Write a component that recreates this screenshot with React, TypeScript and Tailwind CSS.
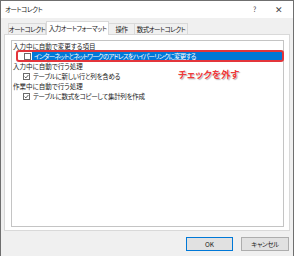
import type { ReactNode } from 'react';

function Box({ checked }: { checked?: boolean }) {
  return (
    <span className="flex h-[7px] w-[7px] shrink-0 items-center justify-center border border-[#6b6b6b] bg-white">
      {checked && (
        <svg viewBox="0 0 5 5" className="h-[5px] w-[5px]">
          <path d="M0.6 2.6 L1.9 3.9 L4.4 1.0" fill="none" stroke="#333" strokeWidth="0.8" />
        </svg>
      )}
    </span>
  );
}

function Group({ children }: { children: ReactNode }) {
  return <div className="flex h-[10px] items-center whitespace-nowrap pl-[1px] leading-none">{children}</div>;
}

function Item({ children }: { children: ReactNode }) {
  return (
    <div className="flex h-[10px] items-center gap-[3px] whitespace-nowrap pl-[11px] leading-none tracking-[-0.3px]">
      <Box checked />
      <span>{children}</span>
    </div>
  );
}

export default function App() {
  return (
    <div className="flex h-[256px] w-[300px] overflow-hidden bg-white font-['Noto_Sans_CJK_JP','Noto_Sans',sans-serif] text-[6.5px] text-[#1a1a1a] [font-feature-settings:'palt']">
      <div className="flex w-[294px] flex-col border-x border-t border-[#6f6f6f] bg-[#f0f0f0]">
        {/* title bar */}
        <div className="flex h-[17px] shrink-0 items-center bg-white pl-[4px] pr-[10px]">
          <span className="flex-1 tracking-[-0.4px]">オートコレクト</span>
          <span className="w-[22px] text-[7px] text-[#444]">?</span>
          <span className="text-[9px] font-light text-[#444]">✕</span>
        </div>

        {/* tabs */}
        <div className="flex h-[16px] shrink-0 items-end whitespace-nowrap px-[3px] leading-none tracking-[-0.5px]">
          <div className="ml-[4px] flex h-[11px] w-[38px] items-center justify-center border-x border-t border-[#d9d9d9] bg-[#f0f0f0]">
            オートコレクト
          </div>
          <div className="relative z-10 -mb-px flex h-[14px] w-[63px] items-start justify-center border-x border-t border-[#d9d9d9] bg-white pt-[3px]">
            入力オートフォーマット
          </div>
          <div className="flex h-[11px] w-[26px] items-center justify-center border-r border-t border-[#d9d9d9] bg-[#f0f0f0]">
            操作
          </div>
          <div className="flex h-[11px] w-[53px] items-center justify-center border-r border-t border-[#d9d9d9] bg-[#f0f0f0]">
            数式オートコレクト
          </div>
        </div>

        {/* tab page */}
        <div className="mx-[3px] flex h-[197px] shrink-0 border border-[#d9d9d9] bg-white pb-[3px] pl-[6px] pr-[5px] pt-[5px]">
          <div className="relative flex flex-1 flex-col border border-[#c4c4c4] bg-white">
            <Group>入力中に自動で変更する項目</Group>
            <div className="flex h-[10px] items-center whitespace-nowrap pl-[12px] leading-none">
              <Box />
              <span className="my-[1px] ml-[1px] mr-[1px] flex h-[8px] flex-1 items-center bg-[#0078d7] pl-[2px] tracking-[-0.8px] text-white">
                インターネットとネットワークのアドレスをハイパーリンクに変更する
              </span>
            </div>
            <Group>入力中に自動で行う処理</Group>
            <Item>テーブルに新しい行と列を含める</Item>
            <Group>作業中に自動で行う処理</Group>
            <Item>テーブルに数式をコピーして集計列を作成</Item>

            {/* annotation */}
            <div className="absolute left-[4px] right-[-1px] top-[9px] h-[12px] rounded-[3px] border-2 border-[#e3353b]" />
            <div className="absolute left-[166px] top-[29px] whitespace-nowrap text-[9.5px] font-bold leading-none text-[#ef3a3a] [text-shadow:0_0_2px_#fff,1px_1px_1px_rgba(0,0,0,0.35)]">
              チェックを外す
            </div>
          </div>
        </div>

        {/* buttons */}
        <div className="flex justify-end gap-[8px] pr-[4px] pt-[6px]">
          <button className="flex h-[14px] w-[47px] items-center justify-center border border-[#0078d7] bg-[#e1e1e1] leading-none">
            OK
          </button>
          <button className="flex h-[14px] w-[48px] items-center justify-center border border-[#adadad] bg-[#e1e1e1] leading-none tracking-[-0.4px]">
            キャンセル
          </button>
        </div>
      </div>
    </div>
  );
}
